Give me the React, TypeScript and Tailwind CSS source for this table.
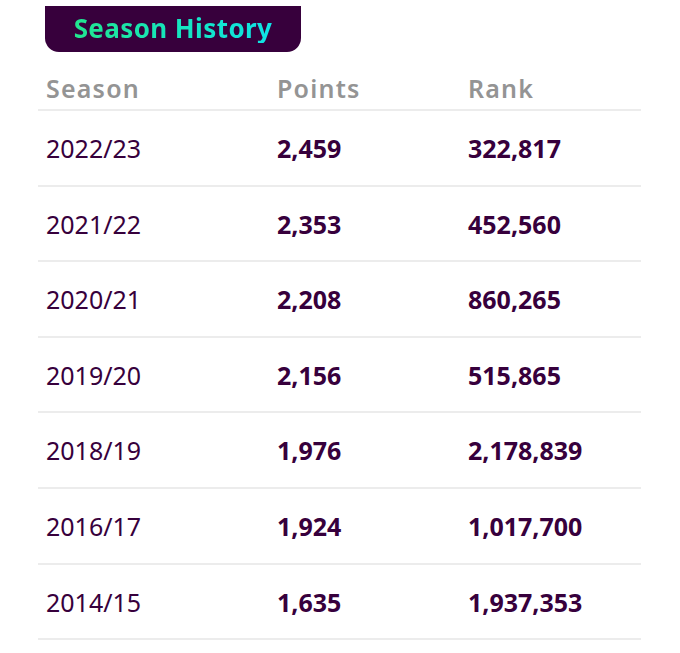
const rows = [
  { season: "2022/23", points: "2,459", rank: "322,817" },
  { season: "2021/22", points: "2,353", rank: "452,560" },
  { season: "2020/21", points: "2,208", rank: "860,265" },
  { season: "2019/20", points: "2,156", rank: "515,865" },
  { season: "2018/19", points: "1,976", rank: "2,178,839" },
  { season: "2016/17", points: "1,924", rank: "1,017,700" },
  { season: "2014/15", points: "1,635", rank: "1,937,353" },
];

export default function App() {
  return (
    <div className="min-h-screen bg-white pt-[6px] pl-[38px] font-['Noto_Sans',sans-serif]">
      <div className="w-[603px]">
        <div className="ml-[7px] flex h-[46px] w-[256px] items-center justify-center rounded-b-[14px] bg-[#37003c]">
          <span className="bg-gradient-to-r from-[#22e58f] to-[#10e4e6] bg-clip-text pb-[2px] text-[26px] font-bold leading-none tracking-[0.4px] text-transparent">
            Season History
          </span>
        </div>

        <div className="grid h-[59px] grid-cols-[231px_191px_1fr] items-end border-b-2 border-[#ececec] pb-[2px] pl-[8px] text-[25px] font-semibold tracking-[1.2px] text-[#949494]">
          <span>Season</span>
          <span>Points</span>
          <span>Rank</span>
        </div>

        {rows.map((r) => (
          <div
            key={r.season}
            className="grid h-[75.6px] grid-cols-[231px_191px_1fr] items-center border-b-2 border-[#ececec] pl-[8px] pt-[2px] text-[25px] text-[#37003c]"
          >
            <span className="font-normal">{r.season}</span>
            <span className="font-bold">{r.points}</span>
            <span className="font-bold">{r.rank}</span>
          </div>
        ))}
      </div>
    </div>
  );
}
